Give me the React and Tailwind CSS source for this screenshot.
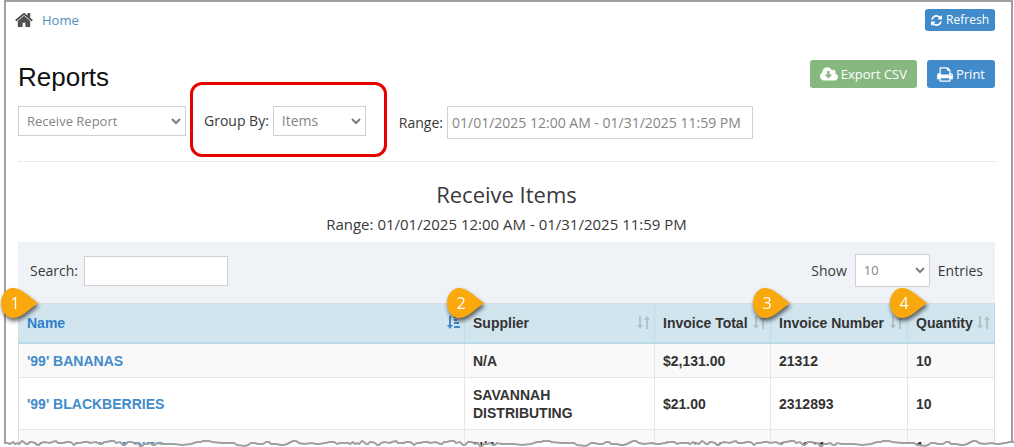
const ROWS = [
  { id: 1, name: "'99' BANANAS", supplier: "N/A", total: "$2,131.00", number: "21312", qty: "10" },
  { id: 2, name: "'99' BLACKBERRIES", supplier: "SAVANNAH DISTRIBUTING", total: "$21.00", number: "2312893", qty: "10" },
  { id: 3, name: "'99' BLACKBERRIES", supplier: "N/A", total: "$1,963.00", number: "231231", qty: "1" },
];

const COLUMNS = [
  { label: "Name", marker: "1", sorted: true, width: "w-[446px]" },
  { label: "Supplier", marker: "2", width: "w-[190px]" },
  { label: "Invoice Total", width: "w-[116px]" },
  { label: "Invoice Number", marker: "3", width: "w-[137px]" },
  { label: "Quantity", marker: "4", width: "w-[87px]" },
];

const ICONS = {
  home: {
    box: "0 0 1664 1792",
    d: "M1408 992v480q0 26-19 45t-45 19h-384v-384h-256v384h-384q-26 0-45-19t-19-45v-480q0-1 .5-3t.5-3l575-474 575 474q1 2 1 6zM1631 923l-62 74q-8 9-21 11h-3q-13 0-21-7l-692-577-692 577q-12 8-24 7-13-2-21-11l-62-74q-8-10-7-23.5t11-21.5l719-599q32-26 76-26t76 26l244 204v-195q0-14 9-23t23-9h192q14 0 23 9t9 23v408l219 182q10 8 11 21.5t-7 23.5z",
  },
  refresh: {
    box: "0 0 1536 1792",
    d: "M1511 1056q0 5-1 7q-64 268-268 434.5t-478 166.5q-146 0-282.5-55t-243.5-157l-129 129q-19 19-45 19t-45-19t-19-45v-448q0-26 19-45t45-19h448q26 0 45 19t19 45t-19 45l-137 137q71 66 161 102t187 36q134 0 250-65t186-179q11-17 53-117q8-23 30-23h192q13 0 22.5 9.5t9.5 22.5zM1536 256v448q0 26-19 45t-45 19h-448q-26 0-45-19t-19-45t19-45l138-138q-148-137-349-137q-134 0-250 65t-186 179q-11 17-53 117q-8 23-30 23h-199q-13 0-22.5-9.5t-9.5-22.5v-7q65-268 270-434.5t480-166.5q146 0 284 55.5t245 156.5l130-129q19-19 45-19t45 19t19 45z",
  },
  print: {
    box: "0 0 1664 1792",
    d: "M384 1536h896v-256h-896v256zM384 896h896v-384h-160q-40 0-68-28t-28-68v-160h-640v640zM1536 960q0-26-19-45t-45-19-45 19-19 45 19 45 45 19 45-19 19-45zM1664 960v416q0 13-9.5 22.5t-22.5 9.5h-224v160q0 40-28 68t-68 28h-960q-40 0-68-28t-28-68v-160h-224q-13 0-22.5-9.5t-9.5-22.5v-416q0-79 56.5-135.5t135.5-56.5h64v-544q0-40 28-68t68-28h672q40 0 88 20t76 48l152 152q28 28 48 76t20 88v256h64q79 0 135.5 56.5t56.5 135.5z",
  },
  cloud: {
    box: "0 0 1920 1792",
    d: "M1280 928q0-14-9-23t-23-9h-224v-352q0-13-9.5-22.5t-22.5-9.5h-192q-13 0-22.5 9.5t-9.5 22.5v352h-224q-13 0-22.5 9.5t-9.5 22.5q0 14 9 23l352 352q9 9 23 9t23-9l351-351q10-12 10-24zM1920 1152q0 159-112.5 271.5t-271.5 112.5h-1088q-185 0-316.5-131.5t-131.5-316.5q0-130 70-240t188-165q-2-30-2-43 0-212 150-362t362-150q156 0 285.5 87t188.5 231q71-62 166-62 106 0 181 75t75 181q0 76-41 138 130 31 213.5 135.5t83.5 238.5z",
  },
};

function Icon({ name, className }) {
  return (
    <svg viewBox={ICONS[name].box} className={className} fill="currentColor" aria-hidden="true">
      <path d={ICONS[name].d} />
    </svg>
  );
}

function SelectBox({ id, label, options, className, textClass }) {
  return (
    <span className={"grid items-center border border-[#d0d0d0] bg-white " + className}>
      <select
        id={id}
        aria-label={label}
        className={"col-start-1 row-start-1 h-full w-full appearance-none bg-transparent pl-2 pr-6 text-[#858585] outline-none " + textClass}
      >
        {options.map((o) => (
          <option key={o}>{o}</option>
        ))}
      </select>
      <svg
        viewBox="0 0 10 7"
        className="pointer-events-none col-start-1 row-start-1 mr-1 h-[7px] w-[10px] justify-self-end"
        fill="none"
        stroke="#7d7d7d"
        strokeWidth="2"
        aria-hidden="true"
      >
        <path d="M1 1l4 4 4-4" />
      </svg>
    </span>
  );
}

function SortIcon({ sorted }) {
  return (
    <svg
      viewBox="0 0 13 13"
      className={"h-[13px] w-[13px] shrink-0 " + (sorted ? "text-[#428bca]" : "text-[#b3c1c9]")}
      fill="currentColor"
      aria-hidden="true"
    >
      <path d="M2 0h2v9h2l-3 4-3-4h2z" />
      {sorted ? (
        <path d="M7 0h2v2h-2zM7 3h3v2h-3zM7 6h5v2h-5zM7 10h6v2h-6z" />
      ) : (
        <path d="M9 13h2v-9h2l-3-4-3 4h2z" />
      )}
    </svg>
  );
}

function Marker({ label }) {
  return (
    <span className="absolute -top-[17px] -left-[19px] grid h-8 w-[38px] drop-shadow-[1px_3px_2px_rgba(0,0,0,0.6)]">
      <svg viewBox="0 0 38 32" className="col-start-1 row-start-1 h-8 w-[38px]" aria-hidden="true">
        <path
          d="M13 1C6 1 1 8 1 16s5 15 12 15c7 0 12-5 25-15C25 6 20 1 13 1z"
          fill="#f9a80d"
        />
      </svg>
      <span className="col-start-1 row-start-1 w-[30px] self-center text-center font-['Open_Sans',sans-serif] text-base leading-4 font-normal text-white">
        {label}
      </span>
    </span>
  );
}

const TORN_LINE =
  "M0 3L4 3 6 4 9 2 11 4 13 3 15 4 18 1 20 2 22 4 24 4 26 2 28 2 31 3 33 5 35 5 37 3 40 2 46 3 48 2 52 1 54 3 60 3 62 2 66 2 68 3 70 5 73 3 76 3 80 2 84 2 86 3 92 2 96 4 98 4 100 2 103 2 106 1 110 1 112 3 116 2 119 5 121 5 124 2 128 2 131 4 134 3 136 6 138 6 140 4 143 4 146 3 149 5 151 5 153 3 158 4 162 4 170 4 178 5 187 4 190 3 193 2 197 2 199 1 205 1 208 2 218 3 224 3 230 3 233 5 241 6 244 5 247 3 251 3 254 4 259 4 262 2 265 2 267 4 273 4 276 5 280 5 283 4 287 2 289 1 292 1 295 3 300 4 308 3 312 4 316 4 320 3 322 3 325 2 330 2 333 4 336 3 340 3";

function TornEdge() {
  return (
    <svg className="absolute bottom-0 left-1 h-[7px] w-full" aria-hidden="true">
      <defs>
        <pattern id="torn" width="340" height="7" patternUnits="userSpaceOnUse">
          <path d={TORN_LINE + "V7H0z"} fill="#fff" />
          <path d={TORN_LINE} fill="none" stroke="#a0a0a0" strokeWidth="2" />
        </pattern>
      </defs>
      <rect width="100%" height="7" fill="url(#torn)" />
    </svg>
  );
}

export default function App() {
  return (
    <div className="relative h-screen overflow-hidden bg-white pr-px pl-1 font-['Open_Sans',sans-serif] text-sm text-[#393939]">
      <div className="h-full border-x-2 border-t-2 border-[#a0a0a0] pr-4 pl-3">
        <nav className="flex items-center justify-between pt-[7px]">
          <a href="#home" className="-ml-[3px] flex items-center gap-[9px] text-[13px] text-[#4c8fbd]">
            <Icon name="home" className="h-5 w-[18px] text-[#4f5050]" />
            Home
          </a>
          <button className="flex h-[22px] items-center gap-1 rounded-[3px] bg-[#428bca] px-[6px] text-xs text-white">
            <Icon name="refresh" className="h-[13px] w-[11px]" />
            Refresh
          </button>
        </nav>

        <header className="flex items-start justify-between pt-[29px]">
          <h1 className="pt-[3px] font-['Liberation_Sans',sans-serif] text-[26px] leading-7 text-[#111]">Reports</h1>
          <div className="flex gap-[10px]">
            <button className="flex h-7 items-center gap-[3px] rounded-[3px] bg-[#87b87f] px-[10px] text-[13px] text-white">
              <Icon name="cloud" className="h-[17px] w-[18px]" />
              Export CSV
            </button>
            <button className="flex h-7 items-center gap-[3px] rounded-[3px] bg-[#428bca] px-[10px] text-[13px] text-white">
              <Icon name="print" className="h-[17px] w-4" />
              Print
            </button>
          </div>
        </header>

        <form className="-mt-1 flex h-[74px] items-center">
          <SelectBox
            id="report"
            label="Report"
            options={["Receive Report"]}
            className="mb-[6px] h-[30px] w-[168px]"
            textClass="text-[13px]"
          />
          <div className="mb-[9px] -mt-px ml-1 flex h-[75px] items-center gap-1 rounded-xl border-3 border-[#e60000] pt-1 pr-[18px] pl-[11px]">
            <label htmlFor="group">Group By:</label>
            <SelectBox
              id="group"
              label="Group By"
              options={["Items"]}
              className="h-[30px] w-[93px]"
              textClass="text-sm"
            />
          </div>
          <div className="mb-[3px] ml-3 flex items-center gap-1">
            <label htmlFor="range">Range:</label>
            <input
              id="range"
              defaultValue="01/01/2025 12:00 AM - 01/31/2025 11:59 PM"
              className="h-[33px] w-[306px] border border-[#d0d0d0] px-1 text-sm text-[#858585] outline-none"
            />
          </div>
        </form>

        <section className="border-t border-dotted border-[#d5d5d5] pt-4">
          <h2 className="text-center text-[22px] leading-8">Receive Items</h2>
          <p className="pt-[2px] text-center text-[15px] leading-6">Range: 01/01/2025 12:00 AM - 01/31/2025 11:59 PM</p>

          <div className="mt-[6px] flex h-[61px] items-center justify-between bg-[#eff3f8] px-3">
            <div className="flex items-center gap-[6px] pb-1">
              <label htmlFor="search">Search:</label>
              <input
                id="search"
                className="h-[30px] w-36 border border-[#d0d0d0] bg-white px-2 outline-none"
              />
            </div>
            <div className="flex items-center gap-2 pb-1">
              <label htmlFor="entries">Show</label>
              <SelectBox
                id="entries"
                label="Entries per page"
                options={["10"]}
                className="h-[33px] w-[75px]"
                textClass="text-[13px]"
              />
              <span>Entries</span>
            </div>
          </div>

          <table className="w-full table-fixed border-collapse border border-[#dddddd] font-['Liberation_Sans',sans-serif] text-sm font-bold">
            <thead>
              <tr className="h-[39px] border-b-2 border-[#bcd9e8] bg-[#d1e5ef] text-left">
                {COLUMNS.map((c) => (
                  <th key={c.label} className={"relative border-r border-[#bcdceb] pr-1 pl-2 font-bold whitespace-nowrap " + c.width}>
                    <div className="flex items-center justify-between gap-1">
                      <span className={c.sorted ? "text-[#307ecc]" : "text-[#333]"}>{c.label}</span>
                      <SortIcon sorted={c.sorted} />
                    </div>
                    {c.marker && <Marker label={c.marker} />}
                  </th>
                ))}
              </tr>
            </thead>
            <tbody className="text-[#333]">
              {ROWS.map((r) => (
                <tr key={r.id} className="border-b border-[#e6e6e6] odd:bg-[#f9f9f9]">
                  <td className="border-r border-[#e6e6e6] px-2 pt-2 pb-[7px] leading-[18px]">
                    <a href="#item" className="text-[#428bca]">{r.name}</a>
                  </td>
                  <td className="border-r border-[#e6e6e6] px-2 pt-2 pb-[7px] leading-[18px]">{r.supplier}</td>
                  <td className="border-r border-[#e6e6e6] px-2 pt-2 pb-[7px] leading-[18px]">{r.total}</td>
                  <td className="border-r border-[#e6e6e6] px-2 pt-2 pb-[7px] leading-[18px]">{r.number}</td>
                  <td className="px-2 pt-2 pb-[7px] leading-[18px]">{r.qty}</td>
                </tr>
              ))}
            </tbody>
          </table>
        </section>
      </div>
      <TornEdge />
    </div>
  );
}
